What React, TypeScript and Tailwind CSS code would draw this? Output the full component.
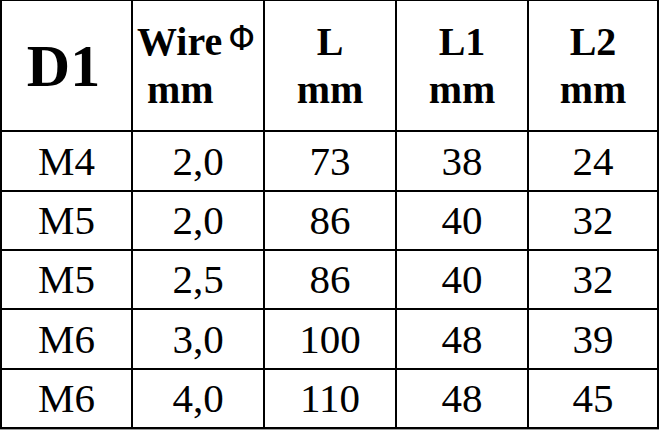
import React from "react";

const rows = [
  ["M4", "2,0", "73", "38", "24"],
  ["M5", "2,0", "86", "40", "32"],
  ["M5", "2,5", "86", "40", "32"],
  ["M6", "3,0", "100", "48", "39"],
  ["M6", "4,0", "110", "48", "45"],
];

export default function App() {
  const serif = { fontFamily: '"Liberation Serif", "Times New Roman", serif' };
  return (
    <div className="w-[660px] h-[430px] bg-white overflow-hidden" style={serif}>
      <div className="w-[659px] bg-black pt-[1px] pl-[2px] pr-[2px] pb-[2px] grid gap-[2px] grid-cols-[129px_130px_130px_130px_128px] grid-rows-[129px_58px_57px_57px_58px_57px]">
        <div className="bg-white flex items-center justify-center">
          <span className="text-[60px] font-bold leading-none text-black pr-[6px]">D1</span>
        </div>
        <div className="bg-white flex flex-col justify-center pl-[4px] text-black font-bold">
          <div className="flex items-start leading-none">
            <span className="text-[40px] leading-[48px]">Wire</span>
            <span
              className="text-[34px] font-normal leading-none mt-[3px] ml-[6px]"
              style={{ fontFamily: '"DejaVu Sans", sans-serif' }}
            >
              Φ
            </span>
          </div>
          <div className="text-[40px] leading-[48px] pl-[10px]">mm</div>
        </div>
        {["L", "L1", "L2"].map((h) => (
          <div key={h} className="bg-white flex flex-col items-center justify-center text-black font-bold">
            <div className="text-[40px] leading-[48px]">{h}</div>
            <div className="text-[40px] leading-[48px]">mm</div>
          </div>
        ))}
        {rows.map((r, i) =>
          r.map((c, j) => (
            <div key={`${i}-${j}`} className="bg-white flex items-center justify-center text-black text-[41px] leading-none">
              {c}
            </div>
          ))
        )}
      </div>
      <div className="w-[659px] h-[1px] bg-[#9a9a9a]" />
    </div>
  );
}
